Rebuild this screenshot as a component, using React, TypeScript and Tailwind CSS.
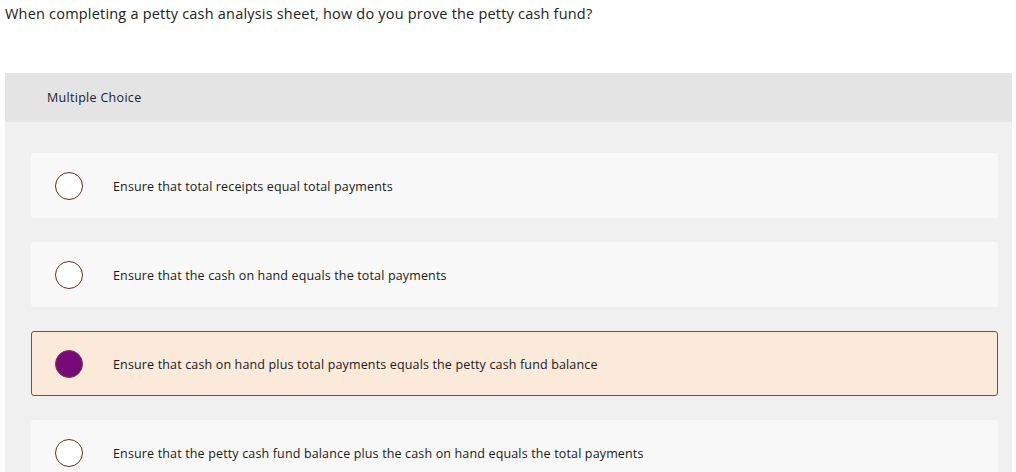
const options = [
  "Ensure that total receipts equal total payments",
  "Ensure that the cash on hand equals the total payments",
  "Ensure that cash on hand plus total payments equals the petty cash fund balance",
  "Ensure that the petty cash fund balance plus the cash on hand equals the total payments",
];

export default function App() {
  const selected = 2;

  return (
    <div className="w-[1016px] h-[472px] overflow-hidden bg-white font-['Open_Sans',sans-serif] text-[#1a1a1a]">
      <p className="pl-[5px] pt-[4px] text-[14.5px] leading-[20px] tracking-[0.2px] text-[#222]">
        When completing a petty cash analysis sheet, how do you prove the petty cash fund?
      </p>

      <div className="mt-[49px] ml-[5px] w-[1007px] bg-[#f0f0f0]">
        {/* Header */}
        <div className="h-[49px] bg-[#e4e4e4] flex items-center pl-[42px]">
          <span className="text-[12.5px] tracking-[0.3px] text-[#1c2233] pt-[2px]">Multiple Choice</span>
        </div>

        <div className="pt-[31px] pl-[26px] pr-[14px] flex flex-col gap-[24px] pb-[20px]">
          {options.map((label, i) => {
            const active = i === selected;
            return (
              <div
                key={i}
                className={`h-[65px] flex items-center pl-[23px] rounded-[3px] border ${
                  active ? "bg-[#fbe9da] border-[#8e4a26]" : "bg-[#f8f8f8] border-transparent"
                }`}
              >
                <span
                  className={`w-[28px] h-[28px] rounded-full shrink-0 ${
                    active ? "bg-[#760a78] border border-[#7a3a4a]" : "bg-white border-[1.5px] border-[#6a2c16]"
                  }`}
                />
                <span className="ml-[30px] pt-[3px] text-[12.5px] tracking-[0.15px] text-[#1a1a1a]">{label}</span>
              </div>
            );
          })}
        </div>
      </div>
    </div>
  );
}
